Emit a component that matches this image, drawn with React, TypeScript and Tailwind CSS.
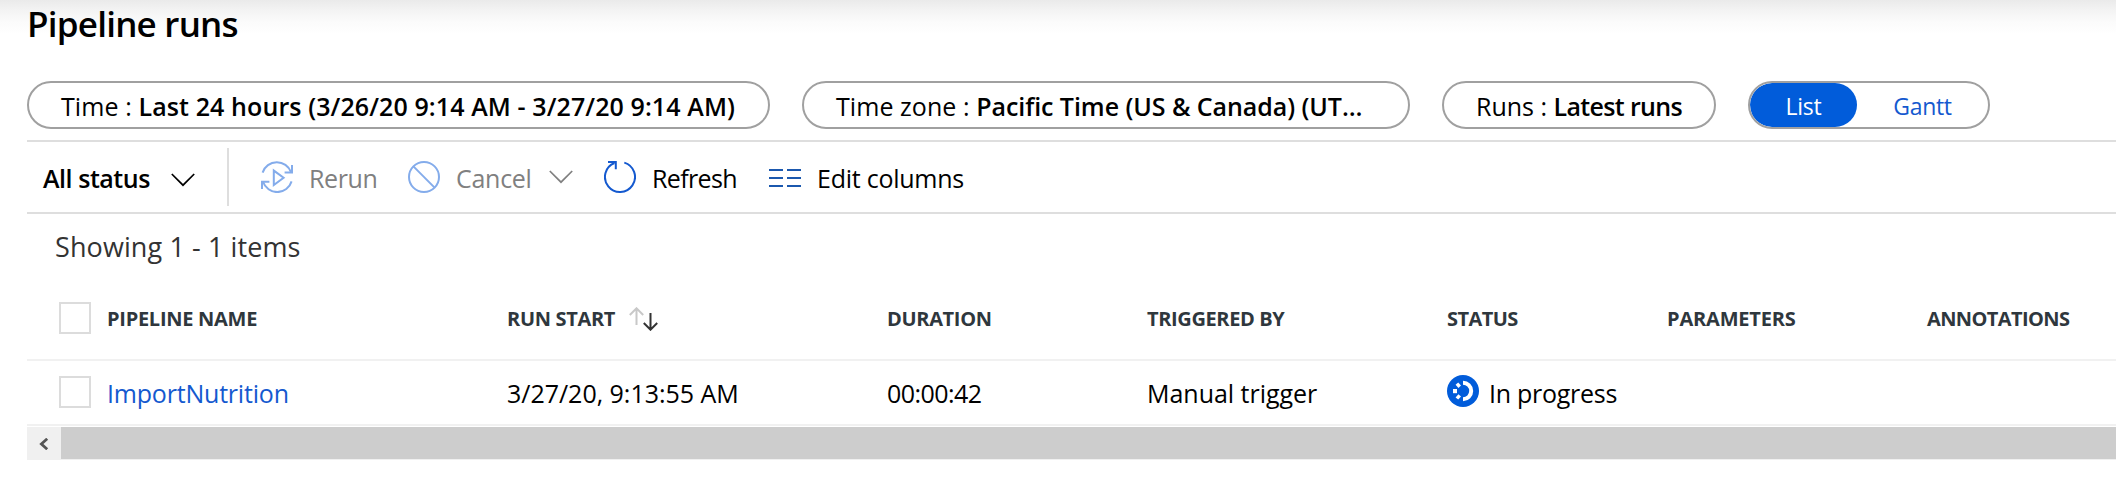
import type { ReactNode } from "react";

function Pill({ label, width, labelClass, value, valueClass }: { label: string; width: string; labelClass: string; value: string; valueClass: string }) {
  return (
    <button className={`flex h-12 shrink-0 items-center whitespace-pre rounded-full border-2 border-[#a0a0a0] bg-white pt-px pl-8 text-[25px] leading-9 text-black ${width}`}>
      <span className={labelClass}>{label}</span>
      <span className={`font-semibold ${valueClass}`}>{value}</span>
    </button>
  );
}

function Chevron({ className }: { className: string }) {
  return (
    <svg viewBox="0 0 24 14" className={`h-[14px] w-6 shrink-0 ${className}`} fill="none" stroke="currentColor" strokeWidth="1.7">
      <path d="M0.8 1L12 12.2L23.2 1" />
    </svg>
  );
}

function RerunIcon() {
  return (
    <svg viewBox="0 0 32 32" className="size-8 shrink-0 text-[#84aceb]" fill="none" stroke="currentColor" strokeWidth="2">
      <path d="M1.6 11.6A15 15 0 0 1 30 11.2" />
      <path d="M31 4V11.4H23.6" />
      <path d="M30.6 20.4A15 15 0 0 1 2 20.8" />
      <path d="M1 28V20.7H8.4" />
      <path d="M12.8 9.6V24L22.6 16.8Z" />
    </svg>
  );
}

function CancelIcon() {
  return (
    <svg viewBox="0 0 32 32" className="size-8 shrink-0 text-[#84aceb]" fill="none" stroke="currentColor" strokeWidth="2">
      <circle cx="16" cy="16" r="15" />
      <path d="M5.4 5.4L26.6 26.6" />
    </svg>
  );
}

function RefreshIcon() {
  return (
    <svg viewBox="0 0 32 32" className="size-8 shrink-0 text-[#1459cf]" fill="none" stroke="currentColor" strokeWidth="2">
      <path d="M20.3 1.6A15 15 0 1 1 10.5 2" />
      <path d="M4 1H11.8V8.2" />
    </svg>
  );
}

function ColumnsIcon() {
  return (
    <svg viewBox="0 0 33 18" className="mt-[2px] h-[18px] w-[33px] shrink-0 text-[#1b58ae]" fill="none" stroke="currentColor" strokeWidth="2">
      <path d="M0 1H14M18 1H32M0 9H14M18 9H32M0 17H14M18 17H32" />
    </svg>
  );
}

function SortIcon() {
  return (
    <svg viewBox="0 0 30 24" className="h-6 w-[30px] shrink-0" fill="none" strokeWidth="2">
      <path d="M7.5 18V1.4M0.8 8L7.5 1.3L14.2 8" stroke="#c8c8c8" />
      <path d="M21.5 6V22.6M14.8 16L21.5 22.7L28.2 16" stroke="#333333" />
    </svg>
  );
}

function ProgressIcon() {
  return (
    <svg viewBox="0 0 32 32" className="mb-[3px] size-8 shrink-0" fill="none">
      <circle cx="16" cy="16" r="16" fill="#015cda" />
      <path d="M16 7.8A8.2 8.2 0 0 1 16 24.2" stroke="#fff" strokeWidth="4" />
      <path d="M6 14h4v4.2H6z" fill="#fff" />
      <path d="M8.6 9.8L11.2 7.6L14 10.6L11.4 13Z" fill="#fff" />
      <path d="M8.6 22.4L11.2 24.6L14 21.6L11.4 19.2Z" fill="#fff" />
    </svg>
  );
}

function Row({ className, children }: { className: string; children: ReactNode }) {
  return (
    <div className={`grid grid-cols-[80px_400px_380px_260px_300px_220px_260px_189px] items-center whitespace-nowrap border-b-2 border-[#f1f1f1] ${className}`}>
      <div className="flex pl-8">
        <span className="mb-px size-8 shrink-0 border-2 border-[#dcdcdc] bg-white" />
      </div>
      {children}
    </div>
  );
}

export default function App() {
  return (
    <div className="h-[479px] w-[2116px] overflow-hidden bg-white bg-[linear-gradient(to_bottom,#eaeaea_0px,#f3f3f3_10px,#fbfbfb_22px,#ffffff_34px)] bg-no-repeat pl-[27px] font-['Open_Sans','Noto_Sans',sans-serif] text-black">
      <h1 className="h-[81px] text-[35px] font-semibold leading-[48px] tracking-[-0.77px]">Pipeline runs</h1>

      <div className="flex h-[59px] items-start gap-8">
        <Pill label="Time : " labelClass="tracking-[0.1px]" value="Last 24 hours (3/26/20 9:14 AM - 3/27/20 9:14 AM)" valueClass="tracking-[0.1px]" width="w-[743px]" />
        <Pill label="Time zone : " labelClass="tracking-[0.06px]" value="Pacific Time (US & Canada) (UT…" valueClass="tracking-[-0.06px]" width="w-[608px]" />
        <Pill label="Runs : " labelClass="tracking-[0px]" value="Latest runs" valueClass="tracking-[-0.66px]" width="w-[274px]" />
        <div className="flex h-12 w-[242px] shrink-0 overflow-hidden rounded-full border-2 border-[#a0a0a0] text-[23px] tracking-[-0.3px]">
          <button className="flex w-[107px] items-center justify-center rounded-full bg-[#015cda] pt-[2px] text-white">List</button>
          <button className="flex flex-1 items-center justify-center pt-[2px] text-[#1459cf]">Gantt</button>
        </div>
      </div>

      <div className="flex h-[74px] items-center border-y-2 border-[#dedede] text-[25px] leading-9">
        <button className="flex w-[200px] items-center pl-4">
          <span className="w-[128px] pt-px text-left font-semibold tracking-[-0.45px]">All status</span>
          <Chevron className="mt-[5px] text-black" />
        </button>
        <span className="h-[58px] w-[2px] shrink-0 bg-[#dedede]" />
        <button className="ml-8 flex w-[147px] items-center gap-4 text-[#808080]">
          <RerunIcon />
          <span className="pt-px tracking-[-0.38px]">Rerun</span>
        </button>
        <button className="flex w-[196px] items-center text-[#808080]">
          <CancelIcon />
          <span className="w-[109px] pt-px pl-4 text-left tracking-[-0.28px]">Cancel</span>
          <Chevron className="mb-[1px]" />
        </button>
        <button className="flex w-[165px] items-center gap-4">
          <RefreshIcon />
          <span className="pt-px tracking-[-0.62px]">Refresh</span>
        </button>
        <button className="flex items-center gap-[15px]">
          <ColumnsIcon />
          <span className="pt-px tracking-[-0.25px]">Edit columns</span>
        </button>
      </div>

      <p className="flex h-[64px] items-center pl-7 pt-[2px] text-[27px] leading-9 tracking-[0.1px] text-[#333333]">Showing 1 - 1 items</p>

      <Row className="h-[83px] text-[20px] font-bold leading-7 text-[#2f373d]">
        <span className="tracking-[-0.27px]">PIPELINE NAME</span>
        <span className="flex items-center gap-[14px]">
          <span className="tracking-[-0.32px]">RUN START</span>
          <SortIcon />
        </span>
        <span className="tracking-[-0.33px]">DURATION</span>
        <span className="tracking-[-0.37px]">TRIGGERED BY</span>
        <span className="tracking-[-0.55px]">STATUS</span>
        <span className="tracking-[-0.18px]">PARAMETERS</span>
        <span className="tracking-[-0.6px]">ANNOTATIONS</span>
      </Row>
      <Row className="h-[65px] text-[25px] leading-9">
        <a className="pt-px tracking-[-0.2px] text-[#1459cf]">ImportNutrition</a>
        <span className="pt-px tracking-[-0.02px]">3/27/20, 9:13:55 AM</span>
        <span className="pt-px tracking-[-0.56px]">00:00:42</span>
        <span className="pt-px tracking-[-0.02px]">Manual trigger</span>
        <span className="flex items-center gap-[10px]">
          <ProgressIcon />
          <span className="pt-px tracking-[-0.26px]">In progress</span>
        </span>
      </Row>

      <div className="mt-px flex h-[33px] bg-[#f0f0f0]">
        <button className="flex w-[34px] items-center pl-3">
          <svg viewBox="0 0 10 12" className="h-3 w-[10px]" fill="none" stroke="#555555" strokeWidth="2.8">
            <path d="M8.2 0.8L2.4 6L8.2 11.2" />
          </svg>
        </button>
        <div className="h-8 flex-1 bg-[#cdcdcd]" />
      </div>
    </div>
  );
}
